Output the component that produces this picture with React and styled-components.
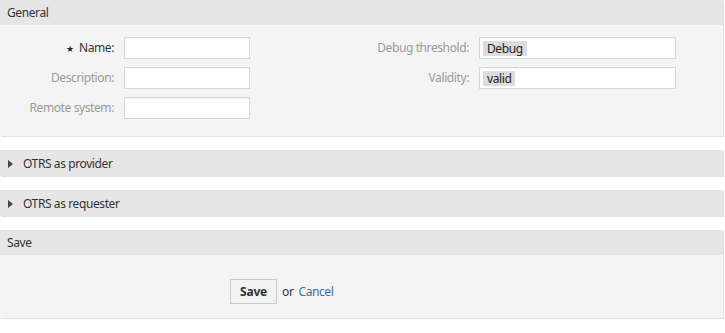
import React from "react";
import styled, { createGlobalStyle } from "styled-components";

const GlobalStyle = createGlobalStyle`
  body {
    margin: 0;
    background: #fff;
    font-family: "Noto Sans", "Open Sans", sans-serif;
    font-size: 12px;
    letter-spacing: -0.4px;
    color: #333;
  }
`;

const Page = styled.div`
  width: 723px;
`;

const Widget = styled.section`
  margin-bottom: 14px;
  box-shadow: 1px 1px 0 #e2e2e2;
`;

const Header = styled.div`
  background: #e6e6e6;
  display: flex;
  align-items: center;
  gap: 10px;
  padding-left: ${(p) => (p.$collapsed ? "8px" : "7px")};
  height: ${(p) => (p.$collapsed ? "26px" : "25px")};
  color: #333;
`;

const Arrow = styled.span`
  width: 0;
  height: 0;
  border-top: 4.5px solid transparent;
  border-bottom: 4.5px solid transparent;
  border-left: 5px solid #444;
  margin-top: 1px;
`;

const Body = styled.div`
  background: #f4f4f4;
  padding: ${(p) => p.$pad || "12px 0 17px"};
`;

const Columns = styled.div`
  display: flex;
`;

const FieldGrid = styled.div`
  display: grid;
  grid-template-columns: ${(p) => p.$label}px ${(p) => p.$input}px;
  column-gap: 10px;
  row-gap: 8px;
  align-content: start;
  width: ${(p) => p.$width}px;
`;

const Label = styled.label`
  text-align: right;
  line-height: 22px;
  height: 22px;
  color: ${(p) => (p.$required ? "#333" : "#999")};
  white-space: nowrap;
`;

const Star = styled.span`
  font-size: 9px;
  margin-right: 5px;
  color: #222;
`;

const Input = styled.div`
  height: 22px;
  box-sizing: border-box;
  background: #fff;
  border: 1px solid #d6d6d6;
  box-shadow: inset 0 1px 1px rgba(0, 0, 0, 0.04);
  display: flex;
  align-items: center;
  padding-left: 3px;
`;

const Tag = styled.span`
  background: #dcdcdc;
  color: #222;
  line-height: 15px;
  padding: 0 4px;
`;

const Actions = styled.div`
  display: flex;
  align-items: center;
  padding-left: 230px;
  gap: 5px;
`;

const Button = styled.button`
  height: 25px;
  padding: 0 9px;
  border: 1px solid #c9c9c9;
  background: #f2f2f2;
  font-family: inherit;
  font-size: 12px;
  letter-spacing: -0.2px;
  font-weight: bold;
  color: #333;
`;

const Or = styled.span`
  color: #333;
`;

const Link = styled.a`
  color: #3d6e9c;
  text-decoration: none;
`;

const leftFields = [
  { label: "Name:", required: true },
  { label: "Description:" },
  { label: "Remote system:" },
];

const rightFields = [
  { label: "Debug threshold:", value: "Debug" },
  { label: "Validity:", value: "valid" },
];

export default function App() {
  return (
    <Page>
      <GlobalStyle />
      <Widget>
        <Header>General</Header>
        <Body>
          <Columns>
            <FieldGrid $label={114} $input={126} $width={362}>
              {leftFields.map((f) => (
                <React.Fragment key={f.label}>
                  <Label $required={f.required}>
                    {f.required && <Star>★</Star>}
                    {f.label}
                  </Label>
                  <Input />
                </React.Fragment>
              ))}
            </FieldGrid>
            <FieldGrid $label={107} $input={197} $width={361}>
              {rightFields.map((f) => (
                <React.Fragment key={f.label}>
                  <Label>{f.label}</Label>
                  <Input>
                    <Tag>{f.value}</Tag>
                  </Input>
                </React.Fragment>
              ))}
            </FieldGrid>
          </Columns>
        </Body>
      </Widget>
      <Widget>
        <Header $collapsed>
          <Arrow />
          OTRS as provider
        </Header>
      </Widget>
      <Widget>
        <Header $collapsed>
          <Arrow />
          OTRS as requester
        </Header>
      </Widget>
      <Widget>
        <Header>Save</Header>
        <Body $pad="24px 0 14px">
          <Actions>
            <Button>Save</Button>
            <Or>or</Or>
            <Link href="#">Cancel</Link>
          </Actions>
        </Body>
      </Widget>
    </Page>
  );
}
